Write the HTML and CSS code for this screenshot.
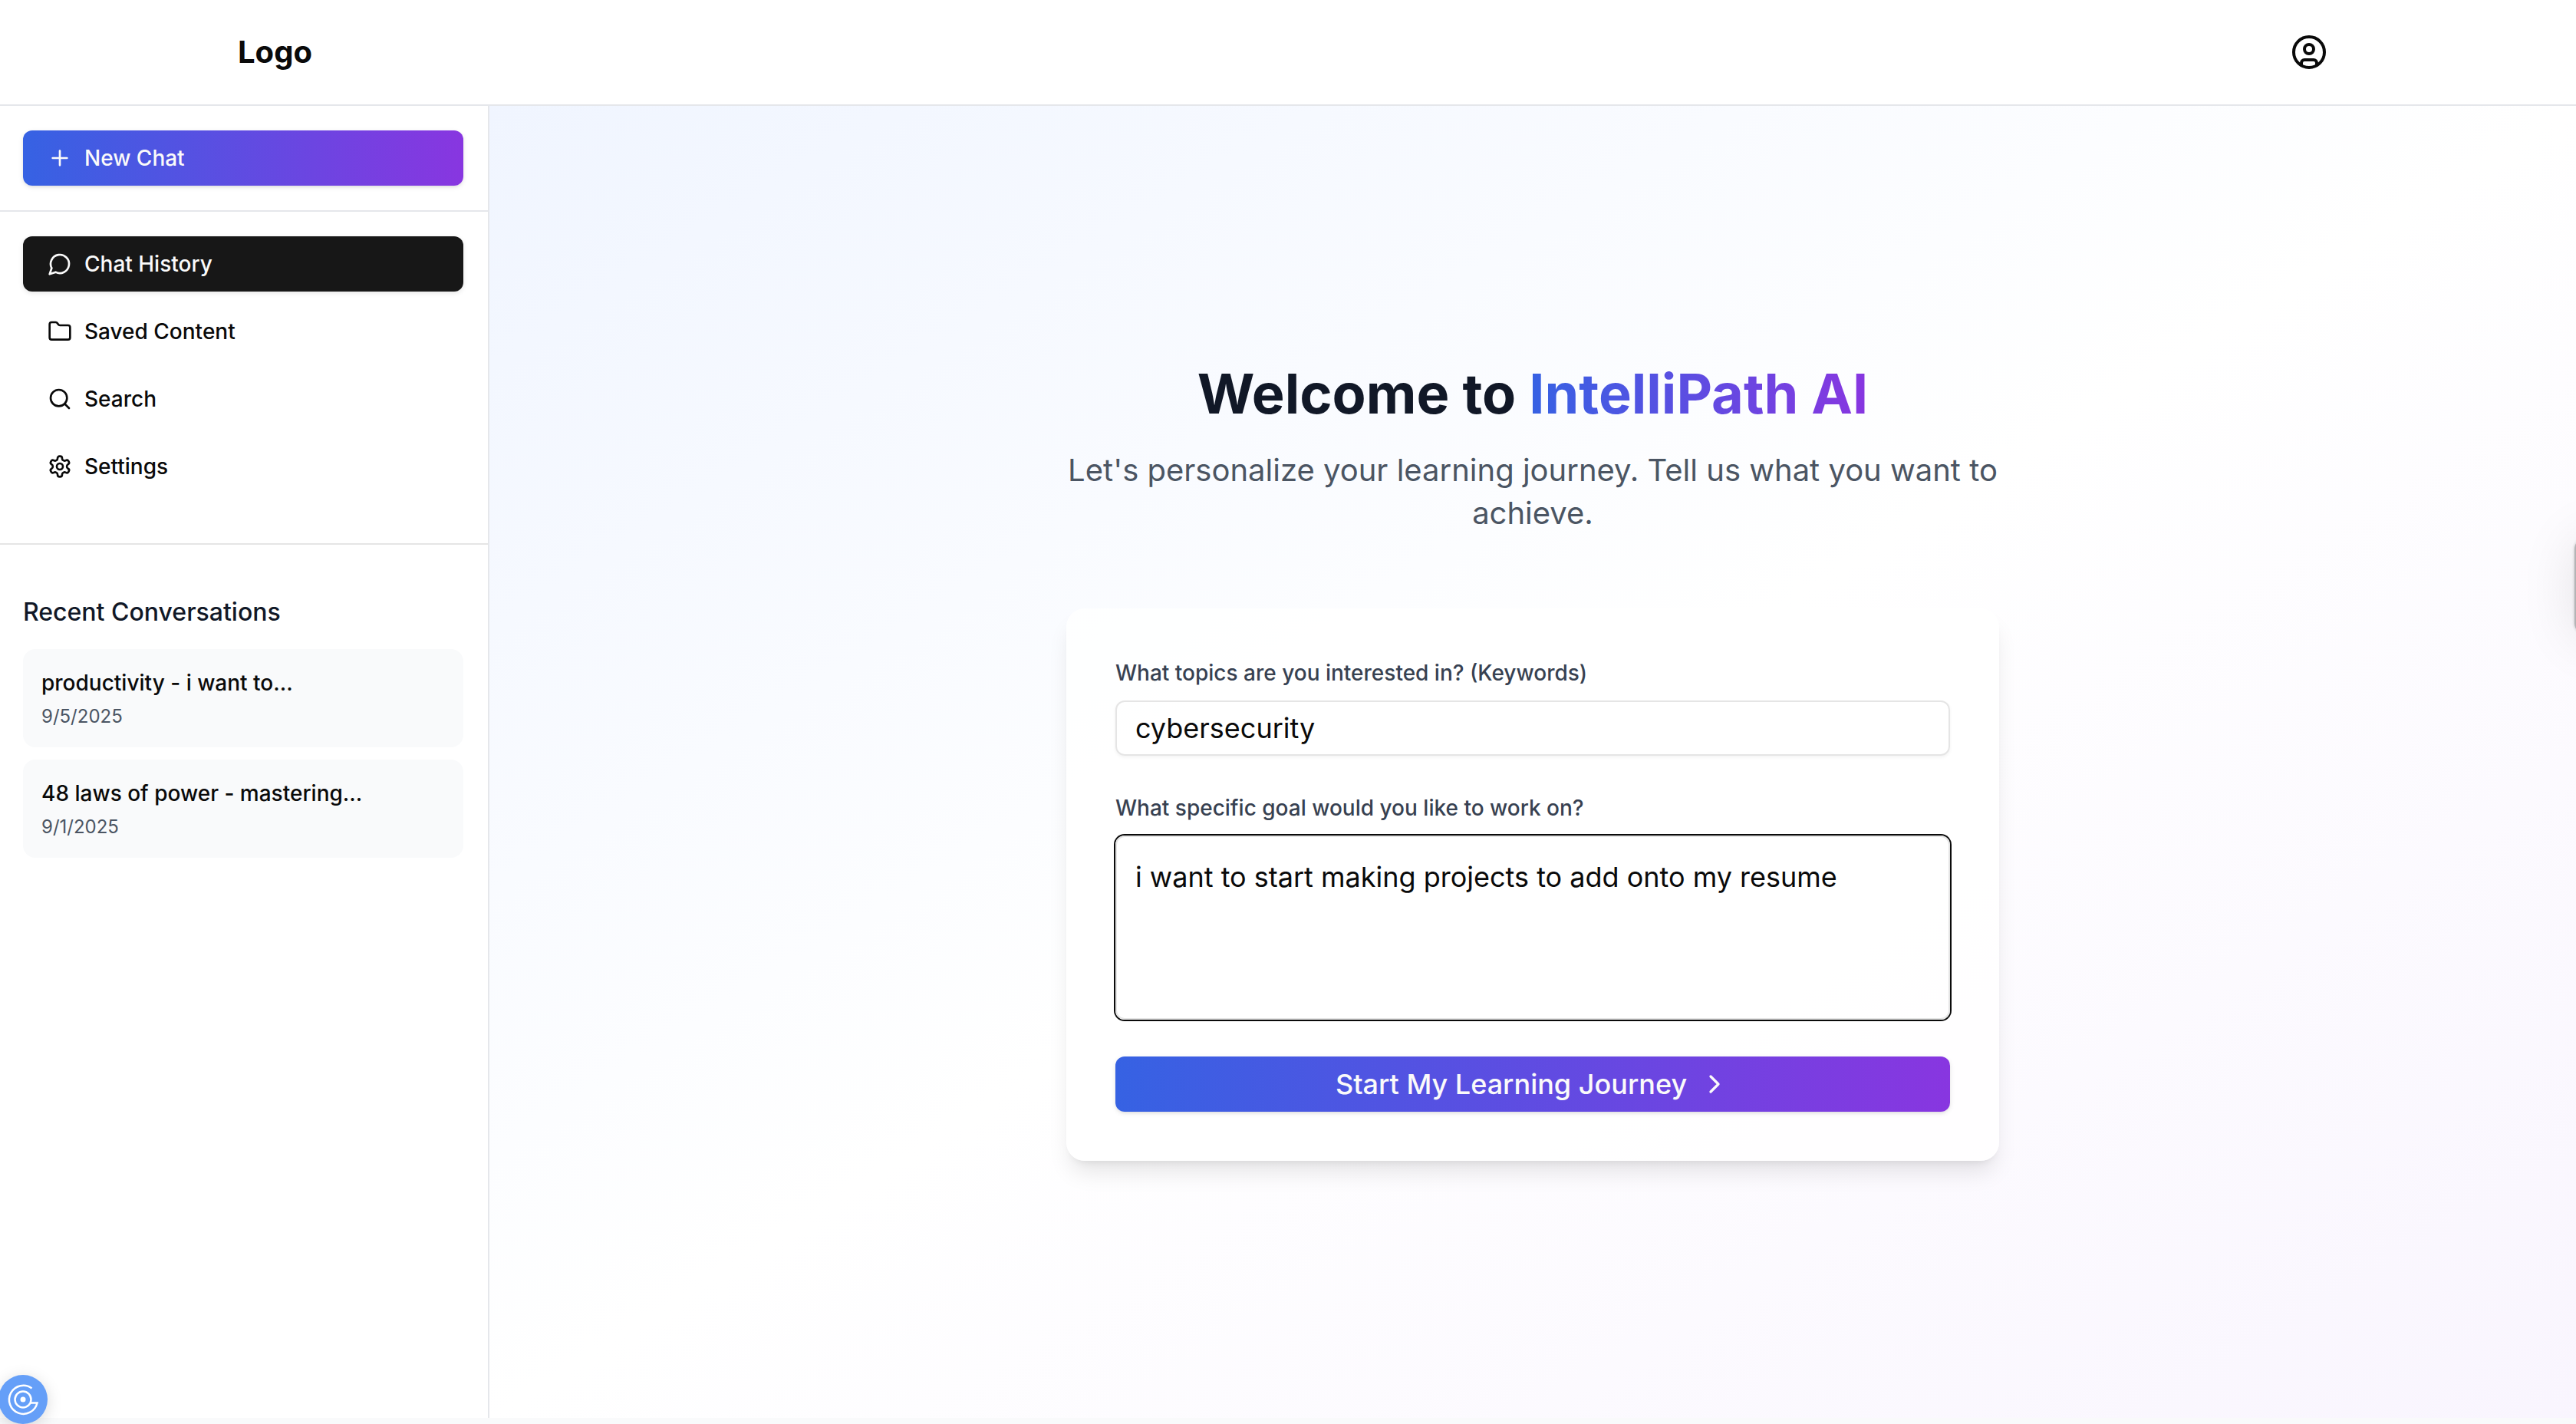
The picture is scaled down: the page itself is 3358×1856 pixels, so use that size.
FILE: index.html
```html
<!DOCTYPE html>
<html lang="en">
<head>
  <meta charset="utf-8">
  <meta name="viewport" content="width=device-width, initial-scale=1">
  <title>IntelliPath AI</title>
  <link rel="stylesheet" href="styles.css">
</head>
<body>
  <header class="topbar">
    <div class="topbar-inner">
      <a class="logo" href="#">Logo</a>
      <button class="account" type="button" aria-label="Account">
        <svg class="icon icon-xl" viewBox="0 0 24 24" aria-hidden="true"><circle cx="12" cy="12" r="10"/><circle cx="12" cy="10" r="3"/><path d="M7 20.662V19a2 2 0 0 1 2-2h6a2 2 0 0 1 2 2v1.662"/></svg>
      </button>
    </div>
  </header>

  <div class="layout">
    <aside class="sidebar">
      <div class="sidebar-top">
        <button class="side-button side-button-new" type="button">
          <svg class="icon" viewBox="0 0 24 24" aria-hidden="true"><path d="M5 12h14M12 5v14"/></svg>
          New Chat
        </button>
      </div>
      <nav class="sidebar-nav">
        <button class="side-button side-button-active" type="button">
          <svg class="icon" viewBox="0 0 24 24" aria-hidden="true"><path d="M7.9 20A9 9 0 1 0 4 16.1L2 22Z"/></svg>
          Chat History
        </button>
        <button class="side-button" type="button">
          <svg class="icon" viewBox="0 0 24 24" aria-hidden="true"><path d="M20 20a2 2 0 0 0 2-2V8a2 2 0 0 0-2-2h-7.900a2 2 0 0 1-1.690-.9L9.600 3.900A2 2 0 0 0 7.930 3H4a2 2 0 0 0-2 2v13a2 2 0 0 0 2 2Z"/></svg>
          Saved Content
        </button>
        <button class="side-button" type="button">
          <svg class="icon" viewBox="0 0 24 24" aria-hidden="true"><circle cx="11" cy="11" r="8"/><path d="m21 21-4.300-4.300"/></svg>
          Search
        </button>
        <button class="side-button" type="button">
          <svg class="icon" viewBox="0 0 24 24" aria-hidden="true"><path d="M12.220 2h-.44a2 2 0 0 0-2 2v.18a2 2 0 0 1-1 1.730l-.43.25a2 2 0 0 1-2 0l-.15-.08a2 2 0 0 0-2.730.73l-.22.38a2 2 0 0 0 .73 2.730l.15.1a2 2 0 0 1 1 1.720v.51a2 2 0 0 1-1 1.740l-.15.09a2 2 0 0 0-.73 2.730l.22.38a2 2 0 0 0 2.730.73l.15-.08a2 2 0 0 1 2 0l.43.25a2 2 0 0 1 1 1.730V20a2 2 0 0 0 2 2h.44a2 2 0 0 0 2-2v-.18a2 2 0 0 1 1-1.730l.43-.25a2 2 0 0 1 2 0l.15.08a2 2 0 0 0 2.730-.73l.22-.39a2 2 0 0 0-.73-2.730l-.15-.08a2 2 0 0 1-1-1.740v-.5a2 2 0 0 1 1-1.740l.15-.09a2 2 0 0 0 .73-2.730l-.22-.38a2 2 0 0 0-2.730-.73l-.15.08a2 2 0 0 1-2 0l-.43-.25a2 2 0 0 1-1-1.730V4a2 2 0 0 0-2-2z"/><circle cx="12" cy="12" r="3"/></svg>
          Settings
        </button>
      </nav>
      <section class="recent">
        <h2 class="recent-title">Recent Conversations</h2>
        <ul class="recent-list">
          <li class="conversation">
            <a class="conversation-link" href="#">productivity - i want to...</a>
            <span class="conversation-date">9/5/2025</span>
          </li>
          <li class="conversation">
            <a class="conversation-link" href="#">48 laws of power - mastering...</a>
            <span class="conversation-date">9/1/2025</span>
          </li>
        </ul>
      </section>
    </aside>

    <main class="main">
      <div class="welcome">
        <h1 class="welcome-title">Welcome to <span class="brand">IntelliPath AI</span></h1>
        <p class="welcome-text">Let's personalize your learning journey. Tell us what you want to achieve.</p>
        <form class="card">
          <div class="field">
            <label class="label" for="topics">What topics are you interested in? (Keywords)</label>
            <input class="input" id="topics" type="text" value="cybersecurity">
          </div>
          <div class="field">
            <label class="label" for="goal">What specific goal would you like to work on?</label>
            <textarea class="input textarea textarea-current" id="goal">i want to start making projects to add onto my resume</textarea>
          </div>
          <button class="submit" type="button">
            Start My Learning Journey
            <svg class="icon icon-lg" viewBox="0 0 24 24" aria-hidden="true"><path d="m9 18 6-6-6-6"/></svg>
          </button>
        </form>
      </div>
    </main>
  </div>

  <button class="consent" type="button" aria-label="Privacy settings">
    <svg class="consent-icon" viewBox="0 0 64 64" aria-hidden="true"><path d="M43.500 17.500A18.500 18.500 0 1 0 50.500 36.500H42"/><circle cx="32" cy="32" r="10.500"/><circle class="consent-dot" cx="32" cy="32" r="3.500"/></svg>
  </button>
  <div class="side-tab"></div>
</body>
</html>
```
FILE: styles.css
```css
:root {
  --blue: #3662e3;
  --purple: #8836e0;
  --ink: #0a0a0a;
  --line: #e5e7eb;
}

*,
*::before,
*::after {
  box-sizing: border-box;
}

body {
  margin: 0;
  min-height: 100vh;
  overflow-x: hidden;
  background: #f9fafb;
  color: var(--ink);
  font-family: Inter, "Liberation Sans", sans-serif;
  font-size: 28px;
  line-height: 40px;
}

h1,
h2,
p,
ul {
  margin: 0;
  padding: 0;
}

button,
input,
textarea {
  margin: 0;
  color: inherit;
  font: inherit;
}

button {
  border: 0;
  background: none;
  cursor: pointer;
}

.icon {
  flex: none;
  width: 32px;
  height: 32px;
  fill: none;
  stroke: currentColor;
  stroke-width: 2;
  stroke-linecap: round;
  stroke-linejoin: round;
}

.icon-lg {
  width: 40px;
  height: 40px;
}

.icon-xl {
  width: 48px;
  height: 48px;
}

/* Top bar */
.topbar {
  padding: 32px 2px 32px 0;
  border-bottom: 2px solid var(--line);
  background: #fff;
}

.topbar-inner {
  display: flex;
  align-items: center;
  justify-content: space-between;
  max-width: 2800px;
  margin: 0 auto;
  padding: 0 32px;
}

.logo {
  color: inherit;
  font-size: 40px;
  font-weight: 700;
  line-height: 56px;
  text-decoration: none;
}

.account {
  display: grid;
  place-items: center;
  width: 72px;
  height: 72px;
  padding: 0;
}

/* Sidebar */
.layout {
  display: flex;
  min-height: calc(100vh - 146px);
}

.sidebar {
  flex: none;
  width: 638px;
  border-right: 2px solid var(--line);
  background: #fff;
}

.sidebar-top {
  padding: 32px 32px 32px 30px;
  border-bottom: 2px solid var(--line);
}

.sidebar-nav {
  display: flex;
  flex-direction: column;
  gap: 16px;
  padding: 32px 32px 64px 30px;
  border-bottom: 2px solid #e5e5e5;
}

.side-button {
  display: flex;
  align-items: center;
  gap: 16px;
  width: 100%;
  height: 72px;
  padding: 0 32px;
  border-radius: 12px;
  font-weight: 500;
}

.side-button-new,
.submit {
  background: linear-gradient(to right, var(--blue), var(--purple));
  color: #fafafa;
  box-shadow: 0 2px 6px rgba(0, 0, 0, 0.1), 0 2px 4px -2px rgba(0, 0, 0, 0.1);
}

.side-button-active {
  background: #171717;
  color: #fafafa;
  box-shadow: 0 2px 6px rgba(0, 0, 0, 0.1);
}

.recent {
  padding: 64px 32px 32px 30px;
}

.recent-title {
  margin-bottom: 24px;
  color: #111827;
  font-size: 32px;
  font-weight: 500;
  line-height: 48px;
}

.recent-list {
  display: grid;
  gap: 16px;
  list-style: none;
}

.conversation {
  display: grid;
  gap: 8px;
  padding: 24px;
  border-radius: 16px;
  background: #f9fafb;
}

.conversation-link {
  color: inherit;
  font-weight: 500;
  text-decoration: none;
}

.conversation-date {
  color: #4b5563;
  font-size: 24px;
  line-height: 32px;
}

/* Welcome form */
.main {
  display: flex;
  flex: 1;
  align-items: center;
  justify-content: center;
  padding: 64px;
  background: linear-gradient(to bottom right, #f0f5ff, #fff, #f9f5fe);
}

.welcome {
  width: 100%;
  max-width: 1216px;
  text-align: center;
}

.welcome-title {
  margin-bottom: 32px;
  color: #111827;
  font-size: 72px;
  font-weight: 700;
  line-height: 80px;
}

.brand {
  background: linear-gradient(to right, var(--blue), var(--purple));
  background-clip: text;
  -webkit-background-clip: text;
  color: transparent;
}

.welcome-text {
  margin-bottom: 96px;
  color: #4b5563;
  font-size: 40px;
  line-height: 56px;
}

.card {
  display: grid;
  gap: 48px;
  padding: 64px;
  border-radius: 24px;
  background: rgba(255, 255, 255, 0.8);
  box-shadow: 0 20px 30px -6px rgba(0, 0, 0, 0.1), 0 8px 12px -8px rgba(0, 0, 0, 0.1);
  text-align: left;
}

.field {
  display: grid;
  gap: 16px;
}

.label {
  color: #374151;
  font-weight: 500;
}

.input {
  width: 100%;
  height: 72px;
  padding: 0 24px;
  border: 2px solid #e5e5e5;
  border-radius: 12px;
  background: transparent;
  box-shadow: 0 2px 4px rgba(0, 0, 0, 0.05);
  font-size: 36px;
  line-height: 56px;
}

.textarea {
  display: block;
  height: 240px;
  padding: 24px;
  resize: none;
}

.textarea-current {
  outline: none;
  box-shadow: 0 0 0 2px var(--ink);
}

.submit {
  display: flex;
  align-items: center;
  justify-content: center;
  gap: 16px;
  width: 100%;
  height: 72px;
  padding: 0 32px;
  border-radius: 12px;
  font-size: 36px;
  font-weight: 500;
}

/* Floating widgets at the window edges */
.consent {
  position: fixed;
  bottom: 0;
  left: -2px;
  width: 64px;
  height: 64px;
  padding: 0;
  border-radius: 50%;
  background: #659ff8;
  box-shadow: 0 4px 20px rgba(0, 0, 0, 0.15);
}

.consent-icon {
  display: block;
  width: 64px;
  height: 64px;
  fill: none;
  stroke: #fff;
  stroke-width: 2.5;
}

.consent-dot {
  fill: #fff;
  stroke: none;
}

.side-tab {
  position: fixed;
  top: 700px;
  right: -94px;
  width: 96px;
  height: 128px;
  border-radius: 16px;
  background: #b4b4b6;
  box-shadow: 0 4px 72px rgba(0, 0, 0, 0.1), 0 0 4px rgba(0, 0, 0, 0.2);
}
```
